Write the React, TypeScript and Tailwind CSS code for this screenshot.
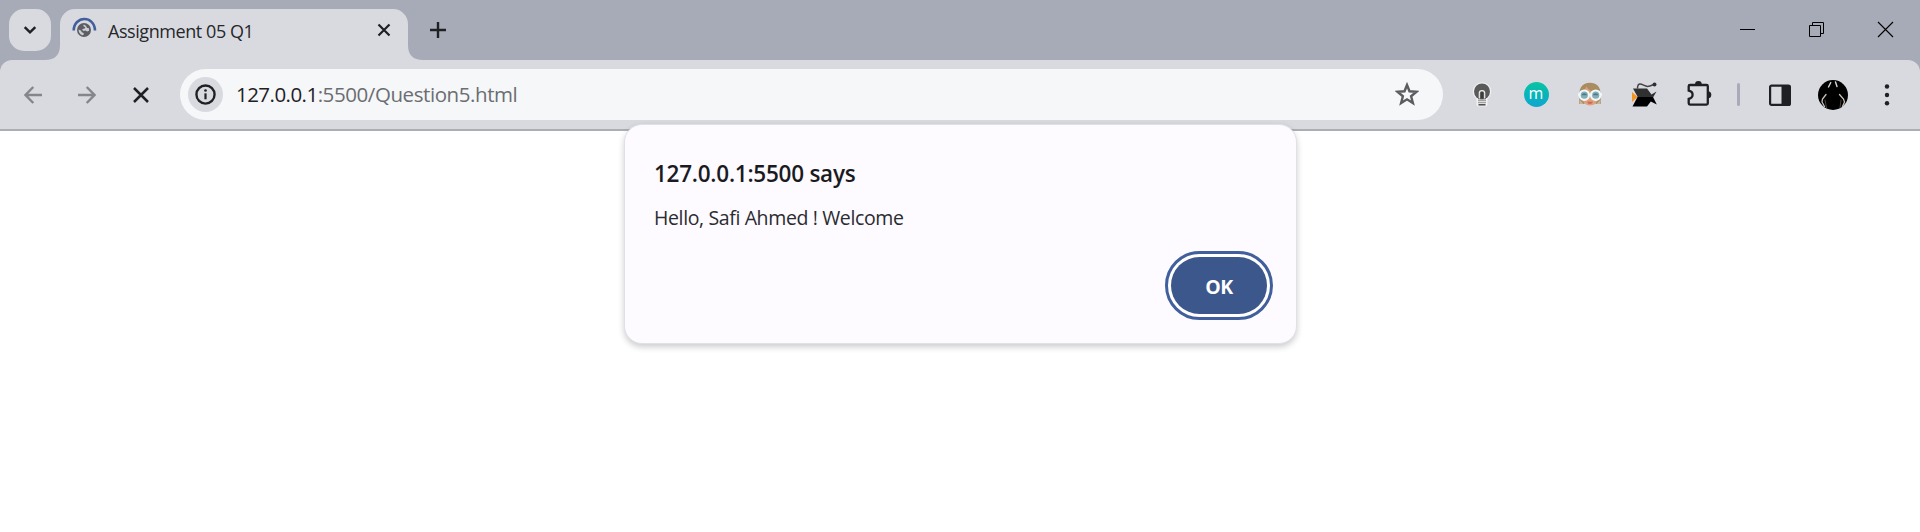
import React from "react";

const stroke = { fill: "none", stroke: "#1f2023" } as const;

function TabLoader() {
  return (
    <svg width="26" height="26" viewBox="71 17 26 26" className="shrink-0">
      <path d="M73.700 30.500C74 15.500 94.500 15 95 30.500" fill="none" stroke="#415f9c" strokeWidth="2.600" />
      <circle cx="84" cy="30" r="7" fill="#5c5e63" />
      <path d="M83.800 24.600c-.8 1.300-.4 2 .6 2.200 1.300.3.900 1.400 0 1.800-1.200.4-1.300 1-2.600.9l1.800 1.500 1.900-.4 1.600.8 2-.6q.1-1.500-.5-2.800-1.600.4-1.900-.8-.4-1.600-2.900-2.600" fill="#cdced4" />
      <path d="M78.700 29.500q-.2 1.500.5 2.900 1 2 3.300 2.900l1.300-.9-.2-1.500-1.800-.6-.7-1.600z" fill="#cdced4" />
    </svg>
  );
}

function TabStrip() {
  return (
    <header className="flex h-[60px] bg-[#a7abb7] pl-[9px] pt-[9px]">
      <button className="flex size-[42px] items-center justify-center rounded-[15px] bg-[#d9dae0]">
        <svg width="14" height="10" viewBox="0 0 14 10">
          <path d="M1.700 2.200L7 7.300l5.300-5.100" {...stroke} strokeWidth="2.500" />
        </svg>
      </button>
      <div className="-ml-[6px] flex">
        <svg width="15" height="15" viewBox="0 0 15 15" className="self-end">
          <path d="M15 0v15H0Q15 15 15 0" fill="#d9dae0" />
        </svg>
        <div className="flex h-[51px] w-[348px] rounded-t-[15px] bg-[#d9dae0] pl-[11px] pt-2">
          <TabLoader />
          <span className="ml-[11px] mt-[2px] h-6 w-[269px] whitespace-nowrap font-['Open_Sans',sans-serif] text-[18px] leading-6 tracking-[-0.430px] text-[#26272b]">
            Assignment 05 Q1
          </span>
          <svg width="14" height="14" viewBox="0 0 14 14" className="mt-[6px]">
            <path d="M1.500 1.500l11 11M12.500 1.500l-11 11" {...stroke} strokeWidth="2.200" />
          </svg>
        </div>
        <svg width="15" height="15" viewBox="0 0 15 15" className="self-end">
          <path d="M0 0v15H15Q0 15 0 0" fill="#d9dae0" />
        </svg>
      </div>
      <svg width="16" height="16" viewBox="0 0 16 16" className="ml-[7px] mt-[13px]">
        <path d="M8 0v16M0 8h16" {...stroke} strokeWidth="2.400" />
      </svg>
      <div className="ml-auto mr-[26px] mt-[12px] flex gap-[52px]">
        <svg width="17" height="17" viewBox="0 0 17 17">
          <path d="M1 8.500h15" fill="none" stroke="#000" />
        </svg>
        <svg width="17" height="17" viewBox="0 0 17 17">
          <path d="M1.500 4.500h11v11h-11zM4.500 4.500v-3h11v11h-3" fill="none" stroke="#000" />
        </svg>
        <svg width="17" height="17" viewBox="0 0 17 17">
          <path d="M1 1l15 15M16 1L1 16" fill="none" stroke="#000" strokeWidth="1.100" />
        </svg>
      </div>
    </header>
  );
}

function Bulb() {
  return (
    <svg width="26" height="28" viewBox="0 0 26 28">
      <circle cx="13" cy="11.500" r="9.300" fill="#f1f1f2" />
      <path d="M7.500 17h11v7.500q0 2-2 2h-7q-2 0-2-2z" fill="#f1f1f2" />
      <circle cx="13" cy="11.500" r="8" fill="#5a5a5a" />
      <path d="M9 17h8v2H9z" fill="#5a5a5a" />
      <path d="M10.300 18.500V13q0-2.300 2.700-2.300t2.700 2.300v5.500" fill="none" stroke="#eee" strokeWidth="1.200" />
      <path d="M13 12v6.500" stroke="#333" strokeWidth="1.500" />
      <path d="M9 20.200h8M9 22.400h8" stroke="#a2a2a2" strokeWidth="1.500" />
      <path d="M9.500 24.800h7" stroke="#3e3e3e" strokeWidth="1.400" />
    </svg>
  );
}

function Face() {
  return (
    <svg width="26" height="28" viewBox="0 0 26 28">
      <path d="M2.500 15C2 6.500 6.500 2.700 13 2.700S24 6.500 23.500 15l.5 9h-5L13 18l-6 6H2z" fill="#a98c60" />
      <path d="M2.500 19.500v4.500h4zM23.500 19.500v4.500h-4z" fill="#c9b59d" />
      <path d="M4.500 15q3-5 5-8.500 2.500 5 12 7.500v3.500q-2 8-8.500 8T4.500 17z" fill="#dfa07c" />
      <path d="M10 21.700h6q-1 2.300-3 2.300t-3-2.300" fill="#d0665b" />
      <path d="M1 14.500h3M22 14.500h3M11 14.800h4" stroke="#eaf7f9" strokeWidth="2.400" />
      <circle cx="7.300" cy="15.200" r="4.700" fill="#86aeb9" stroke="#eff9fa" strokeWidth="2.200" />
      <circle cx="18.700" cy="15.200" r="4.700" fill="#86aeb9" stroke="#eff9fa" strokeWidth="2.200" />
      <path d="M4.500 15.300a2.900 2.900 0 0 1 5.600 0zM15.900 15.300a2.900 2.900 0 0 1 5.600 0z" fill="#4d7a88" />
    </svg>
  );
}

function Fish() {
  return (
    <svg width="28" height="28" viewBox="0 0 28 28" className="-mx-px">
      <path d="M7.500 8.500Q7.500 4 10 4c3 0 5 3 8.500 2.300 2-.3 3.500-1.200 5.500-1.800" fill="none" stroke="#444" strokeWidth="1.500" />
      <circle cx="24.500" cy="4.600" r="2" fill="#303030" />
      <path d="M2 12l5.500 5-5.500 5z" fill="#f79421" />
      <path d="M3 8.500h14l4.500 6 5-3-3.500 6H8z" fill="#303030" />
      <path d="M7.500 17h15.500l3.800 7.500-6-3-3.800 5H2.500z" fill="#000" />
    </svg>
  );
}

function Puzzle() {
  return (
    <svg width="28" height="28" viewBox="0 0 28 28">
      <path d="M5 5H21.500q1.300 0 1.300 1.300v17q0 1.300-1.300 1.300H5q-1.300 0-1.300-1.300v-4.500c5.200-1.200 5.200-7 0-8.200V6.300Q3.700 5 5 5" {...stroke} strokeWidth="2.300" />
      <path d="M10 4.500a3.400 3.400 0 0 1 6.800 0zM22.800 11.300a3.500 3.500 0 0 1 0 7z" fill="#1f2023" />
    </svg>
  );
}

function Avatar() {
  return (
    <svg width="30" height="30" viewBox="0 0 30 30">
      <circle cx="15" cy="15" r="15" fill="#000" />
      <g fill="none" strokeLinecap="round">
        <path d="M12.800 2.500L10.500 7M17.500 2l1.500 4.500" stroke="#d8d8d4" strokeWidth="1.400" />
        <path d="M8 14.500L4.500 19l-.5 3 2.500 4.500M21.500 14.500l4 4.500 1 3-2 4.500" stroke="#c9c1bb" strokeWidth="1.300" />
        <path d="M7 20l1.500 8M23 20l-1 8" stroke="#625650" strokeWidth=".8" />
      </g>
    </svg>
  );
}

function Toolbar() {
  return (
    <div className="bg-[#a7abb7]">
      <nav className="flex h-[71px] items-center rounded-t-[12px] border-b-2 border-[#adadb5] bg-[#d9dae0] pl-[24px]">
        <svg width="18" height="18" viewBox="0 0 18 18">
          <path d="M18 9H1.500M9.300 1L1.500 9l7.800 8" fill="none" stroke="#85868b" strokeWidth="2.400" />
        </svg>
        <svg width="18" height="18" viewBox="0 0 18 18" className="ml-[36px]">
          <path d="M0 9h16.500M8.700 1l7.800 8-7.800 8" fill="none" stroke="#85868b" strokeWidth="2.400" />
        </svg>
        <svg width="16" height="16" viewBox="0 0 16 16" className="ml-[37px]">
          <path d="M1 1l14 14M15 1L1 15" {...stroke} strokeWidth="2.500" />
        </svg>
        <div className="ml-[31px] flex h-[51px] w-[1263px] items-center rounded-full bg-[#f5f7f9] pl-[8px] pr-[24px]">
          <span className="flex size-[35px] items-center justify-center rounded-full bg-[#d9dae0]">
            <svg width="21" height="21" viewBox="0 0 22 22">
              <circle cx="11" cy="11" r="9.500" {...stroke} strokeWidth="2.500" />
              <path d="M11 9.800v6.200" {...stroke} strokeWidth="2.300" />
              <circle cx="11" cy="6.800" r="1.400" fill="#1f2023" />
            </svg>
          </span>
          <span className="ml-[13px] whitespace-nowrap font-['Open_Sans',sans-serif] text-[20.500px] tracking-[-0.420px] text-[#6b6d71]">
            <span className="tracking-[-0.540px] text-[#1f2023]">127.0.0.1</span>:5500/Question5.html
          </span>
          <svg width="24" height="24" viewBox="0 0 24 24" className="mb-[2px] ml-auto">
            <path d="M12 3l2.500 6.300 7 .5-5.400 4.400 1.800 6.800L12 17.300 6.100 21l1.800-6.800L2.500 9.800l7-.5z" fill="none" stroke="#5a5c60" strokeWidth="2.400" />
          </svg>
        </div>
        <div className="mb-[1px] ml-[26px] flex items-center gap-[28px]">
          <Bulb />
          <span className="flex h-[25px] w-[26px] justify-center">
            <span className="flex size-[25px] items-center justify-center rounded-full bg-linear-to-b from-[#0cc4a0] to-[#12a5d0] pb-[2px] font-['Open_Sans',sans-serif] text-[16px] leading-none text-white">
              m
            </span>
          </span>
          <Face />
          <Fish />
          <Puzzle />
        </div>
        <i className="ml-[24px] h-[23px] w-[3px] rounded-full bg-[#a7abb7]" />
        <svg width="24" height="24" viewBox="0 0 24 24" className="ml-[28px]">
          <rect x="2.100" y="2.600" width="19.800" height="19.300" rx="1.500" {...stroke} strokeWidth="2.200" />
          <path d="M13.500 2h7.500q1.500 0 1.500 1.500v17.500q0 1.500-1.500 1.500h-7.500z" fill="#1f2023" />
        </svg>
        <span className="ml-[26px]">
          <Avatar />
        </span>
        <svg width="6" height="22" viewBox="0 0 6 22" className="ml-[36px]">
          <circle cx="3" cy="2.500" r="2.200" fill="#1f2023" />
          <circle cx="3" cy="11" r="2.200" fill="#1f2023" />
          <circle cx="3" cy="19.300" r="2.200" fill="#1f2023" />
        </svg>
      </nav>
    </div>
  );
}

function AlertDialog() {
  return (
    <div
      role="alertdialog"
      className="absolute left-[624px] top-[124px] flex h-[220px] w-[673px] flex-col rounded-[18px] border border-[#dfe1e6] bg-[#fdfbff] pl-[29px] pr-[23px] pt-[33px] font-['Open_Sans',sans-serif] shadow-[0_3px_6px_rgba(0,0,0,0.2)]"
    >
      <h1 className="whitespace-nowrap text-[22.500px] font-semibold leading-[32px] tracking-[-0.250px] text-[#1b1b1f]">127.0.0.1:5500 says</h1>
      <p className="mt-[14px] whitespace-nowrap text-[19.500px] leading-[28px] tracking-[-0.370px] text-[#2b2b30]">
        Hello, Safi Ahmed ! Welcome
      </p>
      <button className="mt-[19px] flex h-[69px] w-[108px] self-end rounded-full border-[3px] border-[#415f9c] bg-white p-[3px]">
        <span className="flex h-full w-full items-center justify-center rounded-full bg-[#3c578b] pt-[2px] text-[19.500px] font-bold tracking-[-0.500px] text-white">
          OK
        </span>
      </button>
    </div>
  );
}

export default function App() {
  return (
    <main className="relative h-[532px] w-[1920px] overflow-hidden bg-white">
      <TabStrip />
      <Toolbar />
      <AlertDialog />
    </main>
  );
}
